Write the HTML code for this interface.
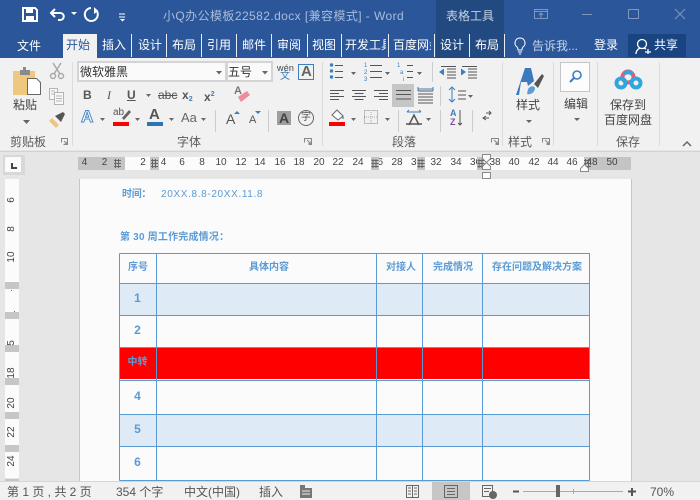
<!DOCTYPE html>
<html><head><meta charset="utf-8"><style>
html,body{margin:0;padding:0}
body{width:700px;height:500px;overflow:hidden;position:relative;background:#e6e6e6;font-family:"Liberation Sans","Noto Sans CJK SC",sans-serif;font-size:12px;color:#444}
div,span,svg{position:absolute}
.t{white-space:nowrap;line-height:16px;height:16px;transform:translateY(-8px)}
.w{color:#fff}
.sep{background:#dcdcdc;width:1px;top:62px;height:84px}
.ts{background:#e8edf5;width:1px;top:34px;height:23px}
.g{color:#5a5a5a}
.r{font-size:10px;color:#444;white-space:nowrap;line-height:12px;top:157px;transform:translateX(-50%)}
.gb{background:#c4c4c4;top:157px;height:13px}
.v{left:5px;width:14px;background:#c6c6c6;height:7px}
.vn{left:12px;font-size:10px;color:#444;line-height:12px;white-space:nowrap;transform:translate(-50%,-50%) rotate(-90deg)}
.h{color:#5b9bd5;font-weight:bold;font-size:10px;white-space:nowrap;line-height:12px;top:262px}
.n{color:#5b9bd5;font-weight:bold;font-size:12px;line-height:12px;left:119px;width:37px;text-align:center}
.st{font-size:12px;color:#555}
</style></head><body>
<div style="left:0;top:0;width:700px;height:58px;background:#2b579a"></div>
<div style="left:436px;top:0;width:68px;height:58px;background:#234a80"></div>
<svg style="left:0;top:0" width="700" height="34">
<g fill="none" stroke="#fff" stroke-width="2"><path d="M23 8h12l2 2v11H23z"/></g>
<path d="M26 8h7v5h-7zM26 16h8v5h-8z" fill="#fff"/>
<path d="M55 9l-4 4 4 4" stroke="#fff" stroke-width="2" fill="none"/><path d="M52 13h8c5 0 5 7 0 7h-2" stroke="#fff" stroke-width="2" fill="none"/>
<path d="M71 12h6l-3 3z" fill="#fff"/>
<path d="M91 8a6.500 6.500 0 1 0 5 2" stroke="#fff" stroke-width="2" fill="none"/><path d="M94 7v7l4-3z" fill="#fff"/>
<path d="M119 14h6M119 17h6" stroke="#fff"/><path d="M120 19h5l-2.500 2.500z" fill="#fff"/>
<g stroke="#7f97bf" fill="none"><path d="M534.500 9.500h13v9h-13zM534.500 11.500h13M541 18v-5M539 15l2-2 2 2"/><path d="M582 14.500h10"/><path d="M628.500 9.500h10v9h-10z"/><path d="M675 9l10 10M685 9l-10 10"/></g>
</svg>
<div class="t" style="left:163px;top:16px;color:#a9bcd9;letter-spacing:.42px;font-size:12px">小Q办公模板22582.docx [兼容模式] - Word</div>
<div class="t" style="left:446px;top:16px;color:#c5d2e5">表格工具</div>
<div style="left:63px;top:34px;width:34px;height:24px;background:#f1f1f1"></div>
<div class="t w" style="left:17px;top:46px">文件</div>
<div class="t" style="left:66px;top:45px;color:#2b579a">开始</div>
<div class="t w" style="left:102px;top:45px">插入</div>
<div class="t w" style="left:138px;top:45px">设计</div>
<div class="t w" style="left:172px;top:45px">布局</div>
<div class="t w" style="left:207px;top:45px">引用</div>
<div class="t w" style="left:242px;top:45px">邮件</div>
<div class="t w" style="left:277px;top:45px">审阅</div>
<div class="t w" style="left:312px;top:45px">视图</div>
<div style="left:342px;top:34px;width:44px;height:23px;overflow:hidden"><div class="t w" style="left:3px;top:11px">开发工具</div></div>
<div style="left:389px;top:34px;width:42px;height:23px;overflow:hidden"><div class="t w" style="left:4px;top:11px">百度网盘</div></div>
<div class="t w" style="left:440px;top:45px">设计</div>
<div class="t w" style="left:475px;top:45px">布局</div>
<div class="ts" style="left:131px"></div><div class="ts" style="left:166px"></div><div class="ts" style="left:201px"></div><div class="ts" style="left:236px"></div><div class="ts" style="left:271px"></div><div class="ts" style="left:307px"></div><div class="ts" style="left:341px"></div><div class="ts" style="left:388px"></div><div class="ts" style="left:434px"></div><div class="ts" style="left:469px"></div><div class="ts" style="left:504px"></div>
<svg style="left:513px;top:37px" width="14" height="18"><path d="M7 1a5 5 0 0 0-3 9c1 1 1 2 1 3h4c0-1 0-2 1-3a5 5 0 0 0-3-9zM5 15h4M6 17h2" fill="none" stroke="#fff"/></svg>
<div class="t" style="left:532px;top:46px;color:#c5d2e5;font-size:12px">告诉我...</div>
<div class="t w" style="left:594px;top:45px">登录</div>
<div style="left:628px;top:34px;width:58px;height:23px;background:#1a4480"></div>
<svg style="left:634px;top:37px" width="18" height="18"><circle cx="8" cy="7" r="4.500" fill="none" stroke="#fff" stroke-width="1.300"/><path d="M2 17c0-3 2-5 4-6M10 11l2 1M11 15h6M14 12v5" fill="none" stroke="#fff" stroke-width="1.300"/></svg>
<div class="t w" style="left:654px;top:45px">共享</div>

<div style="left:0;top:58px;width:700px;height:92px;background:#f1f1f1"></div>
<div style="left:0;top:151px;width:700px;height:1px;background:#d2d2d2"></div>
<div class="sep" style="left:72px"></div><div class="sep" style="left:322px"></div><div class="sep" style="left:502px"></div><div class="sep" style="left:553px"></div><div class="sep" style="left:597px"></div><div class="sep" style="left:659px"></div>

<svg style="left:0;top:58px" width="700" height="92">
<path d="M13 13h22v24H13z" fill="#f0c77e"/><path d="M20 12h3v-3h3v3h4v5H20z" fill="#8a8a8a"/>
<path d="M27.500 20.500h9l4 4v12h-13z" fill="#fff" stroke="#666"/>
<path d="M23 62h7l-3.500 4z" fill="#666"/>
<g stroke="#a9a9a9" fill="none" stroke-width="1.500"><circle cx="53" cy="18" r="2.500"/><circle cx="61" cy="18" r="2.500"/><path d="M54 16l7-11M60 16L53 5"/></g>
<g stroke="#b4b4b4" fill="#f8f8f8"><path d="M49.500 30.500h8v11h-8z"/><path d="M54.500 34.500h9v12h-9z"/><path d="M56 38h6M56 40.500h6M56 43h6M51 33h4M51 36h3" fill="none"/></g>
<path d="M49 63l7 7 3-3-7-7z" fill="#eec582"/><path d="M55 58l8-4 2 2-4 8z" fill="#555"/>
<g fill="none" stroke="#888"><path d="M61.500 84.500v-4h6v6h-4"/><path d="M64 83l3 3M67 83.500v2.500h-2.500"/>
<path d="M304.500 84.500v-4h7v6h-3M307 82l3 3M311 83v2.500h-2.500"/>
<path d="M491.500 84.500v-4h7v6h-3M494 82l3 3M498 83v2.500h-2.500"/>
<path d="M542.500 84.500v-4h7v6h-3M545 82l3 3M549 83v2.500h-2.500"/></g>
<path d="M683 88l4-4 4 4" stroke="#666" stroke-width="1.500" fill="none"/>
<g fill="#666"><path d="M351 14h5l-2.500 3zM385 14h5l-2.500 3zM417 14h5l-2.500 3zM146 36h5l-2.500 3zM100 60h5l-2.500 3zM135 60h5l-2.500 3zM169 60h5l-2.500 3zM201 60h5l-2.500 3zM351 60h5l-2.500 3zM385 60h5l-2.500 3zM426 60h5l-2.500 3zM468 37h5l-2.500 3zM526 62h6l-3 3zM574 60h6l-3 3z"/></g>
<g stroke="#555" fill="none">
<path d="M335 7.500h8M335 13.500h8M335 19.500h8"/><path d="M370 7.500h12M370 13.500h12M370 19.500h12"/>
<path d="M407 7.500h6M407 13.500h6M407 19.500h6"/>
<path d="M447 11h9M447 14h9M447 17h9M447 20h9M441 8.500h15"/><path d="M468 11h9M468 14h9M468 17h9M468 20h9M462 8.500h15" />
<path d="M330 32.500h14M330 35.500h9M330 38.500h14M330 41.500h9"/>
<path d="M352 32.500h14M354.500 35.500h9M352 38.500h14M354.500 41.500h9"/>
<path d="M374 32.500h14M379 35.500h9M374 38.500h14M379 41.500h9"/>
</g>
<g fill="#3c7fc0"><circle cx="331.500" cy="7" r="1.700"/><circle cx="331.500" cy="13" r="1.700"/><circle cx="331.500" cy="19" r="1.700"/>
<path d="M439 14l5-3.500v7zM466 14l-5-3.500v7z" /></g>
<g font-size="6" fill="#3c7fc0" font-family="Liberation Sans"><text x="364" y="9">1</text><text x="364" y="16">2</text><text x="364" y="23">3</text><text x="397" y="9">1</text><text x="400" y="16">a</text><text x="403" y="23">i</text></g>
<rect x="392" y="26" width="22" height="23" fill="#c6c6c6"/>
<path d="M396 32.500h15M396 36.500h15M396 41h15" stroke="#555"/>
<path d="M418 33h15M418 36h15M418 39h15M418 42h15M418 45h15" stroke="#555"/><path d="M418 31h15M418 29v4M433 29v4" stroke="#3c7fc0" fill="none"/>
<path d="M452 29v15M449 32l3-3 3 3M449 41l3 3 3-3" stroke="#3c7fc0" fill="none"/><path d="M458 33h8M458 37h8M458 41h8" stroke="#555" />
<path d="M332 57l5-5 6 6-5 4z" fill="#fff" stroke="#666"/><path d="M343 58c1 1 1 3 0 3s-1-2 0-3z" fill="#3c7fc0"/>
<rect x="329" y="64" width="16" height="4" fill="#f00"/>
<path d="M364.500 52.500h13v13h-13z" fill="none" stroke="#888" stroke-dasharray="1 1"/><path d="M364 59h14M371 52v14" stroke="#aaa" stroke-dasharray="1 1"/>
<path d="M407 54h14M407 54l2-2M421 54l-2-2" stroke="#3c7fc0" fill="none"/><path d="M409 67l5-10 5 10M406 66h16" stroke="#555" stroke-width="1.500" fill="none"/>
<path d="M460 52v15M458 65l2 2 2-2" stroke="#555" fill="none"/>
<path d="M483 60h6M486 58l-3 2 3 2M491 55h-5M489 53l2 2-2 2" stroke="#555" fill="none"/>
<g fill="#ccc"><rect x="215" y="52" width="1" height="22"/><rect x="268" y="52" width="1" height="22"/><rect x="398" y="52" width="1" height="22"/><rect x="440" y="52" width="1" height="22"/><rect x="472" y="52" width="1" height="22"/><rect x="440" y="28" width="1" height="20"/><rect x="432" y="4" width="1" height="20"/></g>
<path d="M238 39l9-6 3 4-9 7z" fill="#ee8b9c"/><text x="234" y="36" font-size="11" fill="#777" font-weight="bold">A</text>
<path d="M516 37l9-27h6l3 13-6 5-1-4h-6l-2 13z" fill="#3d79bd"/><path d="M534 26l8-10 2 2-6 12z" fill="#555"/><path d="M528 31c3-4 6-3 7-1 0 4-4 7-8 6z" fill="#5d9cd5"/>
<rect x="560.500" y="4.500" width="29" height="29" fill="#fcfcfc" stroke="#c6c6c6"/>
<circle cx="577" cy="17" r="4" fill="none" stroke="#3c7fc0" stroke-width="1.600"/><path d="M574 20l-4 4" stroke="#3c7fc0" stroke-width="2"/>
<g fill="none" stroke-width="4"><circle cx="628" cy="19" r="5.500" stroke="#f0566d" /><circle cx="621" cy="25" r="4.500" stroke="#2ea7e0"/><circle cx="636" cy="25" r="4.500" stroke="#2ea7e0"/><path d="M624 16a5.500 5.500 0 0 1 8 0" stroke="#2ea7e0"/></g>
<rect x="113" y="64" width="16" height="4" fill="#f00"/><rect x="147" y="64" width="16" height="4" fill="#2e75b6"/>
<path d="M122 60l7-8 2 2-7 8z" fill="#666"/>
<rect x="277" y="53" width="14" height="14" fill="#9e9e9e"/>
<circle cx="306" cy="60" r="7.500" fill="none" stroke="#666"/>
<rect x="298.500" y="6.500" width="15" height="15" fill="none" stroke="#3c7fc0"/>
</svg>

<div style="left:77px;top:61px;width:146px;height:17px;border:2px solid #d4d4d4;background:#fafafa"></div>
<div style="left:226px;top:61px;width:43px;height:17px;border:2px solid #d4d4d4;background:#fafafa"></div>
<svg style="left:0;top:58px" width="280" height="24"><path d="M216 13h6l-3 3.500zM262 13h6l-3 3.500z" fill="#666"/></svg>
<div class="t" style="left:80px;top:72px;color:#333">微软雅黑</div>
<div class="t" style="left:228px;top:72px;color:#333">五号</div>
<div class="t" style="left:13px;top:105px">粘贴</div>
<div class="t g" style="left:10px;top:142px">剪贴板</div>
<div class="t g" style="left:177px;top:142px">字体</div>
<div class="t g" style="left:392px;top:142px">段落</div>
<div class="t g" style="left:508px;top:142px">样式</div>
<div class="t g" style="left:616px;top:142px">保存</div>
<div class="t" style="left:516px;top:105px">样式</div>
<div class="t" style="left:564px;top:104px">编辑</div>
<div class="t" style="left:610px;top:105px">保存到</div>
<div class="t" style="left:604px;top:120px">百度网盘</div>
<div class="t" style="left:277px;top:68px;font-size:9px;letter-spacing:.2px;color:#444">wén</div>
<div class="t" style="left:280px;top:77px;font-size:10px;color:#3c7fc0">文</div>
<div class="t" style="left:301px;top:72px;font-size:15px;font-weight:bold;color:#666">A</div>
<div class="t" style="left:83px;top:95px;font-weight:bold;color:#555">B</div>
<div class="t" style="left:107px;top:95px;font-style:italic;font-family:'Liberation Serif',serif;color:#555">I</div>
<div class="t" style="left:127px;top:95px;font-weight:bold;color:#555;text-decoration:underline">U</div>
<div class="t" style="left:158px;top:95px;color:#555;text-decoration:line-through">abc</div>
<div class="t" style="left:182px;top:95px;font-weight:bold;color:#555">x<span style="position:static;font-size:7px;color:#3c7fc0;vertical-align:-2px">2</span></div>
<div class="t" style="left:204px;top:95px;font-weight:bold;color:#555">x<span style="position:static;font-size:7px;color:#3c7fc0;vertical-align:5px">2</span></div>
<div class="t" style="left:81px;top:117px;font-size:17px;font-weight:bold;color:#fff;-webkit-text-stroke:1px #4a88c8">A</div>
<div class="t" style="left:113px;top:113px;font-size:10px;color:#555">ab</div>
<div class="t" style="left:149px;top:115px;font-size:15px;font-weight:bold;color:#555">A</div>
<div class="t" style="left:181px;top:118px;font-size:13px;color:#666">Aa</div>
<div class="t" style="left:226px;top:119px;font-size:14px;color:#555">A</div>
<div class="t" style="left:249px;top:120px;font-size:11px;color:#555">A</div>
<svg style="left:0;top:108px" width="300" height="12"><path d="M234 6l3-3 3 3z" fill="#3c7fc0"/><path d="M255 3h6l-3 3z" fill="#3c7fc0"/></svg>
<div class="t" style="left:279px;top:118px;font-size:14px;font-weight:bold;color:#444">A</div>
<div class="t" style="left:301px;top:118px;font-size:10px;color:#555">字</div>
<div class="t" style="left:450px;top:113px;font-size:9px;font-weight:bold;color:#3c7fc0">A</div>
<div class="t" style="left:450px;top:122px;font-size:9px;font-weight:bold;color:#7f4ea0">Z</div>

<!-- horizontal ruler -->
<div style="left:78px;top:157px;width:553px;height:13px;background:#fbfbfb"></div>
<div class="gb" style="left:78px;width:47px"></div><div class="gb" style="left:584px;width:47px"></div>
<div class="r" style="left:84.500px">4</div><div class="r" style="left:104.500px">2</div><div class="r" style="left:143px">2</div><div class="r" style="left:163.500px">4</div><div class="r" style="left:182px">6</div><div class="r" style="left:202px">8</div><div class="r" style="left:221px">10</div><div class="r" style="left:241px">12</div><div class="r" style="left:260px">14</div><div class="r" style="left:280px">16</div><div class="r" style="left:299px">18</div><div class="r" style="left:319px">20</div><div class="r" style="left:338px">22</div><div class="r" style="left:358px">24</div><div class="r" style="left:377.500px">26</div><div class="r" style="left:397px">28</div><div class="r" style="left:416.500px">30</div><div class="r" style="left:436px">32</div><div class="r" style="left:456px">34</div><div class="r" style="left:475.500px">36</div><div class="r" style="left:495px">38</div><div class="r" style="left:514px">40</div><div class="r" style="left:534px">42</div><div class="r" style="left:553px">44</div><div class="r" style="left:572px">46</div><div class="r" style="left:592px">48</div><div class="r" style="left:612px">50</div>
<div class="gb" style="left:150px;width:9px"></div><div class="gb" style="left:371px;width:8px"></div><div class="gb" style="left:417px;width:8px"></div><div class="gb" style="left:477px;width:7px"></div>
<svg style="left:0;top:150px" width="700" height="32">
<g stroke="#666"><path d="M114 10.500h7M114 13.500h7M114 16.500h7M115.500 9v9M118.500 9v9"/><path d="M151 10.500h7M151 13.500h7M151 16.500h7M152.500 9v9M155.500 9v9"/><path d="M371.500 10.500h7M371.500 13.500h7M371.500 16.500h7M373 9v9M376 9v9"/><path d="M417.500 10.500h7M417.500 13.500h7M417.500 16.500h7M419 9v9M422 9v9"/><path d="M477.500 10.500h7M477.500 13.500h7M477.500 16.500h7M479 9v9M482 9v9"/><path d="M584 10.500h7M584 13.500h7M584 16.500h7M585.500 9v9M588.500 9v9"/></g>
<g fill="#fbfbfb" stroke="#8a8a8a"><path d="M482.500 4.500h8v4l-4 4-4-4z"/><path d="M486.500 12.500l4 4v3h-8v-3z"/><path d="M482.500 22.500h8v6h-8z"/><path d="M580.500 21.500v-3l4-4 4 4v3z"/></g>
<rect x="3" y="5" width="22" height="20" fill="#d8d8d8"/><rect x="5" y="7" width="16" height="15" fill="#fbfbfb"/><path d="M12 13v5h5" stroke="#444" stroke-width="2" fill="none"/>
</svg>

<!-- vertical ruler -->
<div style="left:5px;top:179px;width:14px;height:299px;background:#fbfbfb"></div>
<div class="v" style="top:282px"></div><div class="v" style="top:312px"></div><div class="v" style="top:345px"></div><div class="v" style="top:378px"></div><div class="v" style="top:412px"></div><div class="v" style="top:445px"></div><div class="v" style="top:479px;height:2px"></div>
<div style="left:11px;top:290px;width:1px;height:1px;background:#666"></div><div style="left:14px;top:311px;width:1px;height:1px;background:#666"></div>
<div class="vn" style="top:200px">6</div><div class="vn" style="top:229px">8</div><div class="vn" style="top:257px">10</div><div class="vn" style="top:343px">5</div><div class="vn" style="top:373px">18</div><div class="vn" style="top:403px">20</div><div class="vn" style="top:432px">22</div><div class="vn" style="top:461px">24</div>

<!-- page -->
<div style="left:79px;top:179px;width:1px;height:302px;background:#c6c6c6"></div>
<div style="left:631px;top:179px;width:1px;height:302px;background:#c6c6c6"></div>
<div style="left:80px;top:179px;width:551px;height:302px;background:#fbfbfb"></div>
<div class="t" style="left:122px;top:195px;font-size:10px;font-weight:bold;color:#5b9bd5;letter-spacing:-.3px">时间：</div>
<div class="t" style="left:161px;top:195px;font-size:10px;color:#5b9bd5;letter-spacing:.65px">20XX.8.8-20XX.11.8</div>
<div class="t" style="left:120px;top:238px;font-size:10px;font-weight:bold;color:#5b9bd5;letter-spacing:.2px">第 30 周工作完成情况：</div>

<div style="left:120px;top:284px;width:469px;height:31px;background:#deeaf6"></div>
<div style="left:120px;top:415px;width:469px;height:31px;background:#deeaf6"></div>
<div style="left:120px;top:348px;width:469px;height:31px;background:#f00"></div>
<svg style="left:0;top:250px" width="700" height="231"><g stroke="#5b9bd5" fill="none">
<path d="M119.500 3.500h470v227M119.500 3.500v227M156.500 3.500v227M376.500 3.500v227M422.500 3.500v227M482.500 3.500v227M119.500 33.500h470M119.500 65.500h470M119.500 97.500h470M119.500 130.500h470M119.500 164.500h470M119.500 196.500h470M119.500 230.500h470"/>
</g></svg>
<div class="h" style="left:128px">序号</div><div class="h" style="left:249px">具体内容</div><div class="h" style="left:386px">对接人</div><div class="h" style="left:433px">完成情况</div><div class="h" style="left:492px">存在问题及解决方案</div>
<div class="n" style="top:292px">1</div><div class="n" style="top:324px">2</div><div class="n" style="top:390px">4</div><div class="n" style="top:423px">5</div><div class="n" style="top:456px">6</div>
<div class="n" style="top:357px;font-size:10px">中转</div>

<!-- status -->
<div style="left:0;top:481px;width:700px;height:19px;background:#f1f1f1"></div>
<div style="left:0;top:481px;width:700px;height:1px;background:#d6d6d6"></div>
<div class="t st" style="left:7px;top:492px">第 1 页 , 共 2 页</div>
<div class="t st" style="left:116px;top:492px">354 个字</div>
<div class="t st" style="left:184px;top:492px">中文(中国)</div>
<div class="t st" style="left:259px;top:492px">插入</div>
<div style="left:432px;top:482px;width:38px;height:18px;background:#c6c6c6"></div>
<svg style="left:0;top:481px" width="700" height="19">
<path d="M300 4h5v3h7v10h-12z" fill="#777"/><path d="M302 10h8M302 13h8" stroke="#eee"/>
<g stroke="#666" fill="none"><path d="M406.500 4.500h6v12h-6zM412.500 4.500h6v12h-6zM408 7h3M408 10h3M408 13h3M414 7h3M414 10h3M414 13h3"/>
<path d="M444.500 4.500h13v12h-13zM447 7.500h8M447 10.500h8M447 13.500h8"/>
<path d="M482.500 4.500h10v11h-10zM484 7.500h7M484 10.500h5"/></g>
<circle cx="493" cy="14" r="4" fill="#666"/>
<path d="M513 10.500h6M628 10.500h8M632 7v8" stroke="#555" stroke-width="2" fill="none"/>
<path d="M523 10.500h100M573.500 8v5" stroke="#aaa"/><rect x="556" y="4" width="4" height="12" fill="#666"/>
</svg>
<div class="t st" style="left:650px;top:492px;font-size:12px">70%</div>
</body></html>
